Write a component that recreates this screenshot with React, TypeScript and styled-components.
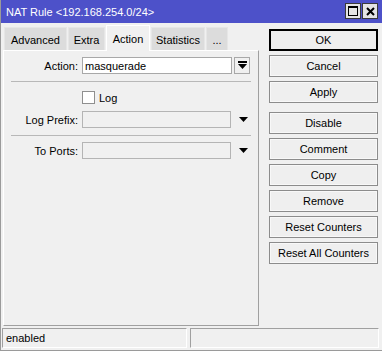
import styled, { createGlobalStyle } from "styled-components";

const GlobalStyle = createGlobalStyle`
	html, body {
		margin: 0;
		padding: 0;
		background: #f0f0f0;
	}

	body {
		font-family: "Liberation Sans", Arial, sans-serif;
		font-size: 11px;
		color: #000;
	}
`;

const WindowFrame = styled.div`
	width: 382px;
	height: 351px;
	box-sizing: border-box;
	display: flex;
	flex-direction: column;
	background: #f0f0f0;
	border-left: 1px solid #9a9a9a;
	border-bottom: 1px solid #9a9a9a;
	overflow: hidden;
`;

const TitleBar = styled.div`
	height: 23px;
	flex: none;
	display: flex;
	align-items: center;
	justify-content: space-between;
	padding: 0 4px 0 5px;
	background: #4d51c9;
	color: #fff;
	font-size: 11px;
`;

const TitleButtons = styled.div`
	display: flex;
	gap: 1px;
	margin-top: -1px;
`;

const TitleButton = styled.div`
	width: 14px;
	height: 14px;
	display: flex;
	align-items: center;
	justify-content: center;
	background: #e4e4e4;
	border: 1px solid #3a3a3a;
`;

const Body = styled.div`
	flex: 1;
	display: flex;
	gap: 10px;
	padding: 1px 4px 0 2px;
`;

const LeftColumn = styled.div`
	width: 256px;
	display: flex;
	flex-direction: column;
`;

const TabStrip = styled.div`
	height: 26px;
	display: flex;
	align-items: flex-end;
	padding-left: 1px;
	gap: 1px;
`;

const Tab = styled.div<{ $active?: boolean; $width: number }>`
	width: ${(props) => props.$width}px;
	height: ${(props) => (props.$active ? 26 : 23)}px;
	box-sizing: border-box;
	display: flex;
	align-items: center;
	justify-content: center;
	padding-top: ${(props) => (props.$active ? 0 : 2)}px;
	background: ${(props) => (props.$active ? "#f0f0f0" : "#dcdcdc")};
	border: 1px solid ${(props) => (props.$active ? "#ffffff" : "#e6e6e6")};
	border-bottom: none;
	font-size: 11px;
	position: relative;
	z-index: ${(props) => (props.$active ? 1 : 0)};
	margin-bottom: ${(props) => (props.$active ? -1 : 0)}px;
`;

const Panel = styled.div`
	height: 276px;
	box-sizing: border-box;
	border-top: 1px solid #ffffff;
	border-left: 1px solid #ffffff;
	border-right: 1px solid #a0a0a0;
	border-bottom: 1px solid #a0a0a0;
	padding: 6px 7px 0 7px;
	display: flex;
	flex-direction: column;
`;

const FieldRow = styled.div`
	height: 17px;
	display: flex;
	align-items: center;
	gap: 4px;
`;

const FieldLabel = styled.label`
	width: 67px;
	text-align: right;
	flex: none;
`;

const TextBox = styled.div<{ $disabled?: boolean }>`
	width: 150px;
	height: 17px;
	box-sizing: border-box;
	display: flex;
	align-items: center;
	padding-left: 2px;
	background: ${(props) => (props.$disabled ? "#f0f0f0" : "#ffffff")};
	border: 1px solid ${(props) => (props.$disabled ? "#b4b4b4" : "#a8a8a8")};
	font-size: 11px;
`;

const DropButton = styled.div`
	width: 16px;
	height: 17px;
	box-sizing: border-box;
	margin-left: -2px;
	display: flex;
	align-items: center;
	justify-content: center;
	border: 1px solid #a8a8a8;
	background: #f0f0f0;
`;

const ArrowSlot = styled.div`
	width: 16px;
	height: 17px;
	display: flex;
	align-items: center;
	justify-content: center;
`;

const Separator = styled.div<{ $after: number }>`
	height: 1px;
	margin: 7px 0 ${(props) => props.$after}px 0;
	background: #b8b8b8;
	width: 240px;
`;

const CheckRow = styled.div`
	height: 13px;
	display: flex;
	align-items: center;
	gap: 4px;
	padding-left: 71px;
	margin-bottom: 7px;
	font-size: 11px;
`;

const CheckBox = styled.div`
	width: 13px;
	height: 13px;
	box-sizing: border-box;
	background: #ffffff;
	border: 1px solid #8f8f8f;
`;

const ButtonColumn = styled.div`
	width: 109px;
	display: flex;
	flex-direction: column;
	gap: 4px;
	padding-top: 5px;
`;

const ActionButton = styled.div<{ $primary?: boolean; $spaced?: boolean }>`
	height: 22px;
	box-sizing: border-box;
	display: flex;
	align-items: center;
	justify-content: center;
	background: #efefef;
	border: 1px solid ${(props) => (props.$primary ? "#000000" : "#8c8c8c")};
	box-shadow: ${(props) => (props.$primary ? "inset 0 0 0 1px #000" : "inset 0 0 0 1px #f8f8f8")};
	margin-top: ${(props) => (props.$spaced ? 5 : 0)}px;
	font-size: 11px;
`;

const StatusBar = styled.div`
	height: 22px;
	flex: none;
	display: flex;
	gap: 3px;
	padding: 1px 3px 1px 1px;
	margin-bottom: 1px;
	box-sizing: border-box;
`;

const StatusField = styled.div<{ $grow: number }>`
	flex: ${(props) => props.$grow};
	box-sizing: border-box;
	display: flex;
	align-items: center;
	padding-left: 3px;
	border-top: 1px solid #a0a0a0;
	border-left: 1px solid #a0a0a0;
	border-right: 1px solid #ffffff;
	border-bottom: 1px solid #ffffff;
	font-size: 11px;
`;

const tabs = [
	{ name: "Advanced", width: 63 },
	{ name: "Extra", width: 37 },
	{ name: "Action", width: 44, active: true },
	{ name: "Statistics", width: 54 },
	{ name: "...", width: 22 },
];

const buttons = [
	{ label: "OK", primary: true },
	{ label: "Cancel" },
	{ label: "Apply" },
	{ label: "Disable", spaced: true },
	{ label: "Comment" },
	{ label: "Copy" },
	{ label: "Remove" },
	{ label: "Reset Counters" },
	{ label: "Reset All Counters" },
];

function DownTriangle() {
	return (
		<svg width="9" height="5" viewBox="0 0 9 5">
			<path d="M0 0 H9 L4.5 5 Z" fill="#000" />
		</svg>
	);
}

function DropIcon() {
	return (
		<svg width="9" height="9" viewBox="0 0 9 9">
			<rect x="0" y="0" width="9" height="2" fill="#000" />
			<path d="M0 3 H9 L4.5 8 Z" fill="#000" />
		</svg>
	);
}

export default function App(): JSX.Element {
	return (
		<>
			<GlobalStyle />
			<WindowFrame>
				<TitleBar>
					<span>NAT Rule &lt;192.168.254.0/24&gt;</span>
					<TitleButtons>
						<TitleButton>
							<svg width="10" height="10" viewBox="0 0 10 10">
								<rect x="0.5" y="0.5" width="9" height="9" fill="none" stroke="#000" />
								<rect x="0" y="0" width="10" height="2" fill="#000" />
							</svg>
						</TitleButton>
						<TitleButton>
							<svg width="9" height="9" viewBox="0 0 9 9">
								<path d="M1 1 L8 8 M8 1 L1 8" stroke="#000" strokeWidth="2" />
							</svg>
						</TitleButton>
					</TitleButtons>
				</TitleBar>

				<Body>
					<LeftColumn>
						<TabStrip>
							{tabs.map((tab) => (
								<Tab key={tab.name} $active={tab.active} $width={tab.width}>
									{tab.name}
								</Tab>
							))}
						</TabStrip>

						<Panel>
							<FieldRow>
								<FieldLabel>Action:</FieldLabel>
								<TextBox>masquerade</TextBox>
								<DropButton>
									<DropIcon />
								</DropButton>
							</FieldRow>

							<Separator $after={9} />

							<CheckRow>
								<CheckBox />
								<span>Log</span>
							</CheckRow>

							<FieldRow>
								<FieldLabel>Log Prefix:</FieldLabel>
								<TextBox $disabled />
								<ArrowSlot>
									<DownTriangle />
								</ArrowSlot>
							</FieldRow>

							<Separator $after={6} />

							<FieldRow>
								<FieldLabel>To Ports:</FieldLabel>
								<TextBox $disabled />
								<ArrowSlot>
									<DownTriangle />
								</ArrowSlot>
							</FieldRow>
						</Panel>
					</LeftColumn>

					<ButtonColumn>
						{buttons.map((button) => (
							<ActionButton key={button.label} $primary={button.primary} $spaced={button.spaced}>
								{button.label}
							</ActionButton>
						))}
					</ButtonColumn>
				</Body>

				<StatusBar>
					<StatusField $grow={184}>enabled</StatusField>
					<StatusField $grow={189} />
				</StatusBar>
			</WindowFrame>
		</>
	);
}
